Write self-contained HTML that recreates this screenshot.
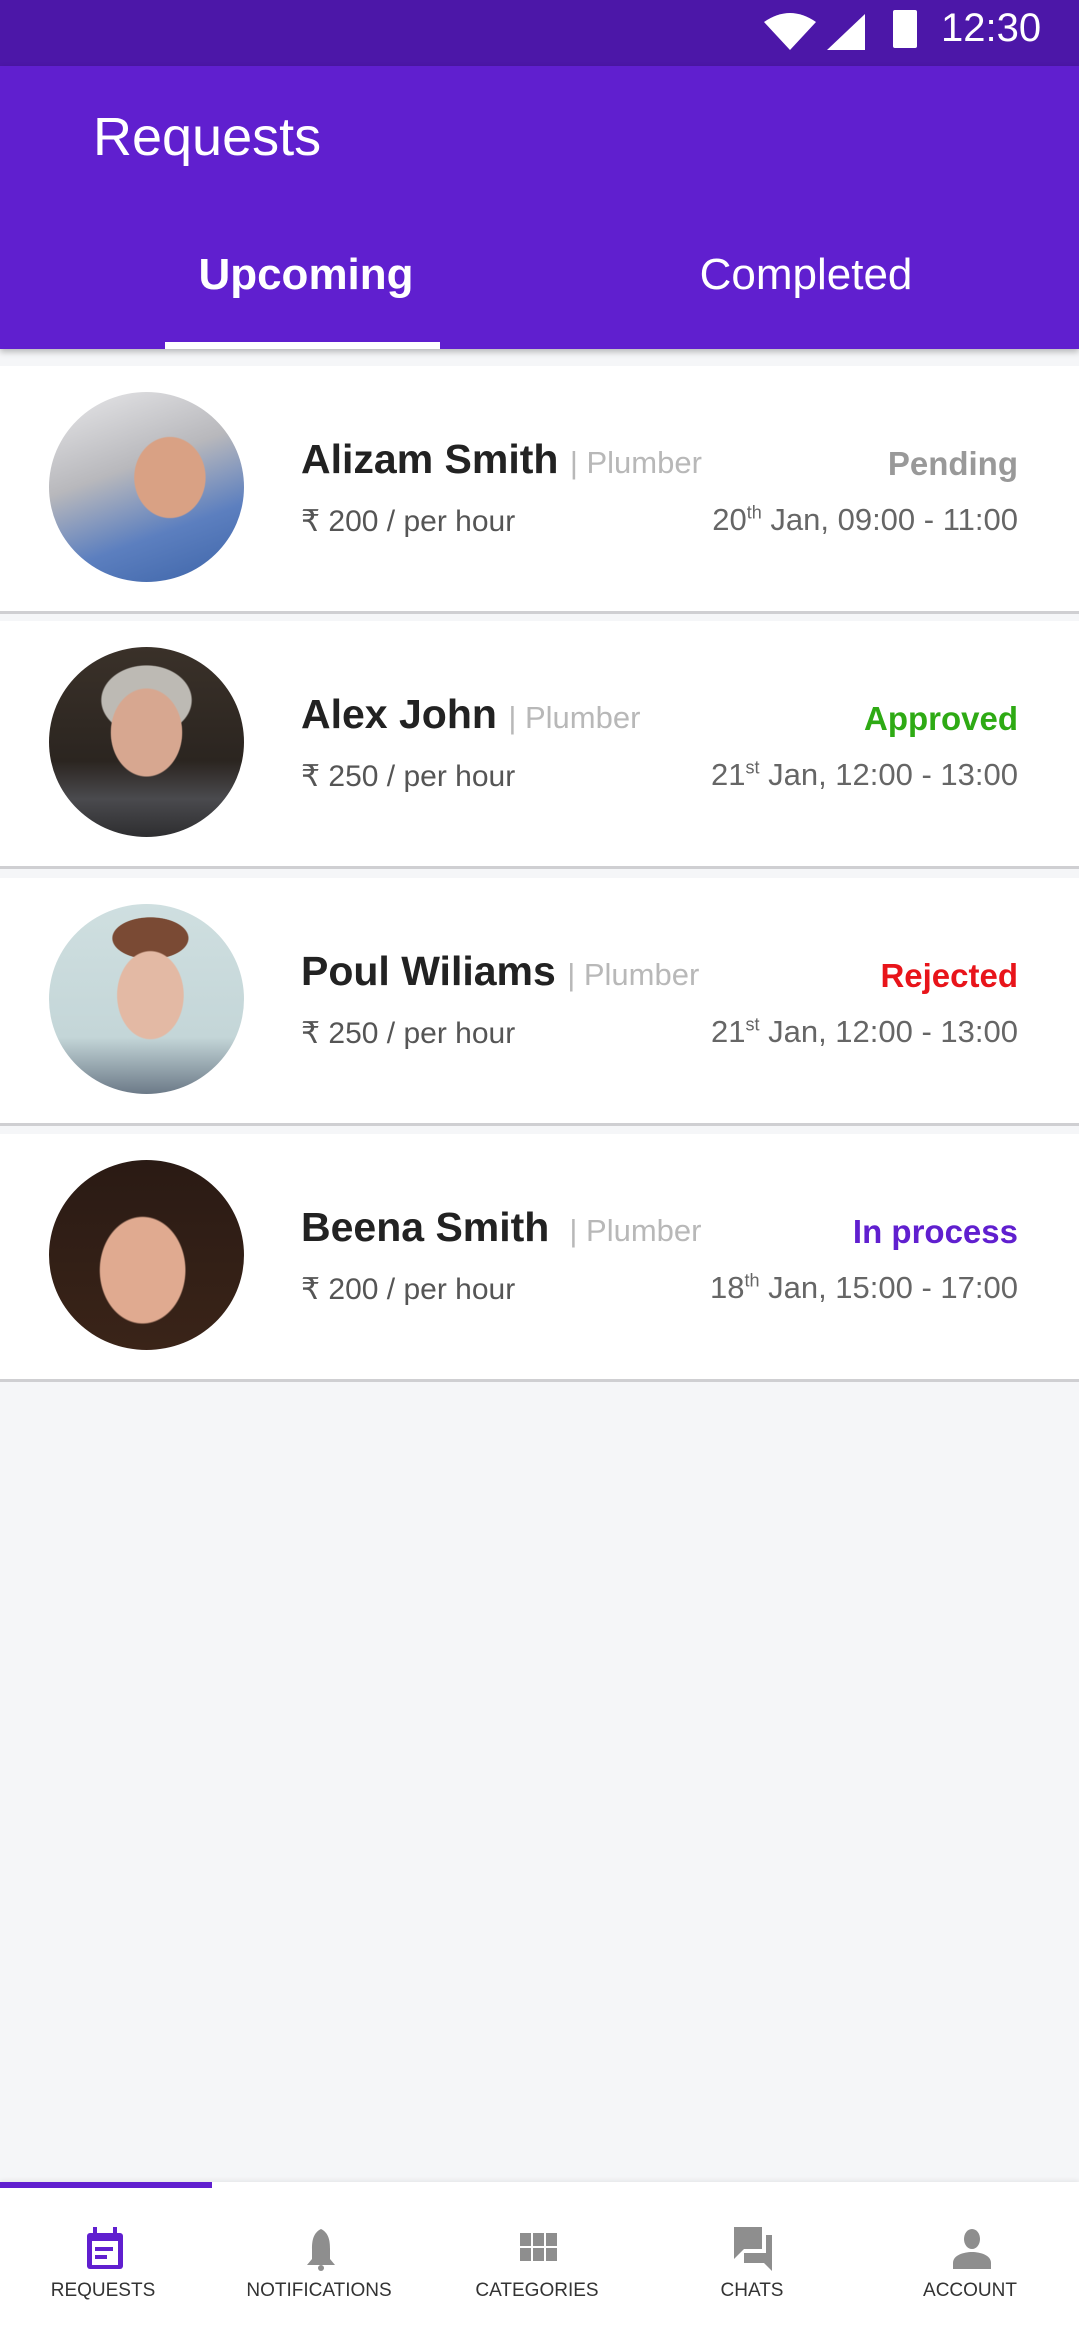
<!DOCTYPE html>
<html><head><meta charset="utf-8"><style>
*{margin:0;padding:0;box-sizing:border-box}
body{width:1079px;height:2340px;background:#f5f6f8;font-family:"Liberation Sans",sans-serif;position:relative;overflow:hidden}
.sb{position:absolute;left:0;top:0;width:1079px;height:66px;background:#4c17a8}
.hd{position:absolute;left:0;top:66px;width:1079px;height:283px;background:#601fcf;box-shadow:0 3px 6px rgba(0,0,0,.25)}
.title{position:absolute;left:93px;top:40px;color:#fff;font-size:54px}
.tab{position:absolute;color:#fff;font-size:44px;width:400px;text-align:center}
.ind{position:absolute;left:165px;top:276px;width:275px;height:7px;background:#fff}
.card{position:absolute;left:0;width:1079px;height:248px;background:#fff;border-bottom:3px solid #cfcfd2}
.av{position:absolute;left:49px;top:26px;width:195px;height:190px;border-radius:50%;overflow:hidden}
.name{position:absolute;left:301px;top:70px;font-size:41px;font-weight:bold;color:#222}
.name span{font-weight:normal;color:#b8b8b8;font-size:31px}
.price{position:absolute;left:301px;top:138px;font-size:30px;color:#555}
.st{position:absolute;right:61px;top:79px;font-size:33px;font-weight:bold}
.dt{position:absolute;right:61px;top:136px;font-size:31px;color:#666}
.dt sup{font-size:18px}
.nav{position:absolute;left:0;top:2182px;width:1079px;height:158px;background:#fff;box-shadow:0 -2px 4px rgba(0,0,0,.06)}
.nind{position:absolute;left:0;top:0;width:212px;height:6px;background:#601fcf}
.ni{position:absolute;top:0;width:216px;height:158px;text-align:center}
.ni svg{position:absolute;left:88px;top:45px}
.ni div{position:absolute;top:98px;width:100%;font-size:19px;color:#333}
</style></head><body>
<div class="sb">
<svg style="position:absolute;left:762px;top:12px" width="56" height="40" viewBox="0 0 56 40"><path d="M2 10 Q28 -8 54 10 L28 38 Z" fill="#fff"/></svg>
<svg style="position:absolute;left:825px;top:14px" width="40" height="36"><path d="M40 0 V36 H2 Z" fill="#fff"/></svg>
<div style="position:absolute;left:893px;top:10px;width:24px;height:38px;background:#fff;border-radius:2px"></div>
<div style="position:absolute;left:941px;top:6px;color:#fff;font-size:40px">12:30</div>
</div>
<div class="hd">
<div class="title">Requests</div>
<div class="tab" style="left:106px;top:184px;font-weight:bold">Upcoming</div>
<div class="tab" style="left:606px;top:184px">Completed</div>
<div class="ind"></div>
</div>

<div class="card" style="top:366px">
<div class="av" style="background:radial-gradient(ellipse 30% 35% at 62% 45%,#d9a184 60%,transparent 62%),linear-gradient(160deg,#e8e8ea 0%,#b8b8bc 40%,#5c7fbf 70%,#3d64a8 100%)"></div>
<div class="name">Alizam Smith <span>| Plumber</span></div>
<div class="price">₹ 200 / per hour</div>
<div class="st" style="color:#999">Pending</div>
<div class="dt">20<sup>th</sup> Jan, 09:00 - 11:00</div>
</div>
<div class="card" style="top:621px">
<div class="av" style="background:radial-gradient(ellipse 30% 38% at 50% 45%,#d7a790 60%,transparent 62%),radial-gradient(ellipse 38% 30% at 50% 28%,#bdbab4 60%,transparent 62%),linear-gradient(180deg,#3a3129 0%,#2b2520 60%,#4a4a4e 80%,#2e2e30 100%)"></div>
<div class="name">Alex John <span>| Plumber</span></div>
<div class="price">₹ 250 / per hour</div>
<div class="st" style="color:#2eaa14">Approved</div>
<div class="dt">21<sup>st</sup> Jan, 12:00 - 13:00</div>
</div>
<div class="card" style="top:878px">
<div class="av" style="background:radial-gradient(ellipse 28% 38% at 52% 48%,#e3b9a4 60%,transparent 62%),radial-gradient(ellipse 32% 18% at 52% 18%,#7a4a34 60%,transparent 62%),linear-gradient(180deg,#cfdfe0 0%,#c4d6d8 70%,#6c7a88 100%)"></div>
<div class="name">Poul Wiliams <span>| Plumber</span></div>
<div class="price">₹ 250 / per hour</div>
<div class="st" style="color:#e8141a">Rejected</div>
<div class="dt">21<sup>st</sup> Jan, 12:00 - 13:00</div>
</div>
<div class="card" style="top:1134px">
<div class="av" style="background:radial-gradient(ellipse 36% 46% at 48% 58%,#e0aa90 60%,transparent 62%),linear-gradient(180deg,#2a1a14,#3a2418)"></div>
<div class="name">Beena Smith <span>&nbsp;| Plumber</span></div>
<div class="price">₹ 200 / per hour</div>
<div class="st" style="color:#601fcf">In process</div>
<div class="dt">18<sup>th</sup> Jan, 15:00 - 17:00</div>
</div>

<div class="nav">
<div class="nind"></div>
<div class="ni" style="left:-5px"><svg width="44" height="44" viewBox="0 0 44 44"><rect x="4" y="6" width="36" height="36" rx="3" fill="#601fcf"/><rect x="10" y="0" width="4" height="8" fill="#601fcf"/><rect x="30" y="0" width="4" height="8" fill="#601fcf"/><rect x="9" y="14" width="26" height="24" fill="#fff"/><rect x="12" y="20" width="18" height="4" fill="#601fcf"/><rect x="12" y="28" width="12" height="4" fill="#601fcf"/></svg><div>REQUESTS</div></div>
<div class="ni" style="left:211px"><svg width="44" height="44" viewBox="0 0 44 44"><path d="M22 2 C30 6 31 14 31 22 V32 L36 38 H8 L13 32 V22 C13 14 14 6 22 2Z" fill="#8e8e8e"/><circle cx="22" cy="41" r="3" fill="#8e8e8e"/></svg><div>NOTIFICATIONS</div></div>
<div class="ni" style="left:429px"><svg width="44" height="44" viewBox="0 0 44 44"><g fill="#8e8e8e"><rect x="3" y="6" width="11" height="13"/><rect x="16" y="6" width="11" height="13"/><rect x="29" y="6" width="11" height="13"/><rect x="3" y="21" width="11" height="13"/><rect x="16" y="21" width="11" height="13"/><rect x="29" y="21" width="11" height="13"/></g></svg><div>CATEGORIES</div></div>
<div class="ni" style="left:644px"><svg width="46" height="46" viewBox="0 0 46 46"><path d="M2 0 H30 V22 H12 L2 32Z" fill="#8e8e8e"/><path d="M34 8 H40 V44 L32 36 H12 V26 H34Z" fill="#8e8e8e"/></svg><div>CHATS</div></div>
<div class="ni" style="left:862px"><svg width="44" height="44" viewBox="0 0 44 44"><ellipse cx="22" cy="12" rx="8" ry="10" fill="#8e8e8e"/><path d="M3 42 V36 C3 28 14 25 22 25 C30 25 41 28 41 36 V42Z" fill="#8e8e8e"/></svg><div>ACCOUNT</div></div>
</div>
</body></html>
